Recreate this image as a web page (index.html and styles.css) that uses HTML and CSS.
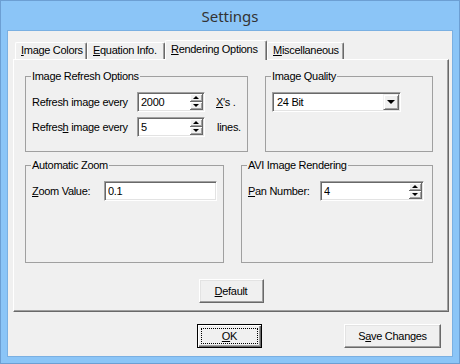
FILE: index.html
```html
<!DOCTYPE html>
<html lang="en">
<head>
    <meta charset="UTF-8">
    <title>Settings</title>
    <link rel="stylesheet" href="styles.css">
</head>
<body>

    <!-- Dialog window -->
    <div class="window">
        <div class="titlebar">Settings</div>

        <div class="client">
            <!-- Tabs -->
            <div class="tabs">
                <div class="tab tab-colors"><u>I</u>mage Colors</div>
                <div class="tab tab-equation"><u>E</u>quation Info.</div>
                <div class="tab tab-rendering active"><u>R</u>endering Options</div>
                <div class="tab tab-misc"><u>M</u>iscellaneous</div>
            </div>

            <!-- Rendering Options page -->
            <div class="panel">
                <div class="group-row">
                    <fieldset class="group group-refresh">
                        <legend>Image Refresh Options</legend>
                        <div class="field-row">
                            <label class="field-label refresh-label">Refresh image every</label>
                            <div class="edit refresh-edit">
                                <input type="text" value="2000">
                                <div class="spin">
                                    <span class="spin-btn"><span class="arrow-up"></span></span>
                                    <span class="spin-btn"><span class="arrow-down"></span></span>
                                </div>
                            </div>
                            <span class="unit"><u>X</u>'s .</span>
                        </div>
                        <div class="field-row">
                            <label class="field-label refresh-label">Refres<u>h</u> image every</label>
                            <div class="edit refresh-edit">
                                <input type="text" value="5">
                                <div class="spin">
                                    <span class="spin-btn"><span class="arrow-up"></span></span>
                                    <span class="spin-btn"><span class="arrow-down"></span></span>
                                </div>
                            </div>
                            <span class="unit unit-lines">lines.</span>
                        </div>
                    </fieldset>

                    <fieldset class="group group-quality">
                        <legend>Image Quality</legend>
                        <div class="field-row">
                            <div class="edit combo">
                                <span class="combo-value">24 Bit</span>
                                <span class="combo-btn"><span class="arrow-down big"></span></span>
                            </div>
                        </div>
                    </fieldset>
                </div>

                <div class="group-row">
                    <fieldset class="group group-zoom">
                        <legend>Automatic Zoom</legend>
                        <div class="field-row">
                            <label class="field-label short-label"><u>Z</u>oom Value:</label>
                            <div class="edit zoom-edit">
                                <input type="text" value="0.1">
                            </div>
                        </div>
                    </fieldset>

                    <fieldset class="group group-avi">
                        <legend>AVI Image Rendering</legend>
                        <div class="field-row">
                            <label class="field-label short-label"><u>P</u>an Number:</label>
                            <div class="edit pan-edit">
                                <input type="text" value="4">
                                <div class="spin">
                                    <span class="spin-btn"><span class="arrow-up"></span></span>
                                    <span class="spin-btn"><span class="arrow-down"></span></span>
                                </div>
                            </div>
                        </div>
                    </fieldset>
                </div>

                <div class="panel-actions">
                    <button class="btn btn-small"><u>D</u>efault</button>
                </div>
            </div>

            <!-- Dialog buttons -->
            <div class="footer">
                <button class="btn btn-small btn-focused"><span class="focus-ring"><u>O</u>K</span></button>
                <button class="btn btn-save">S<u>a</u>ve Changes</button>
            </div>
        </div>
    </div>

</body>
</html>
```

FILE: styles.css
```css
/* body */
body {
    margin: 0;
    font-family: "Liberation Sans", Arial, sans-serif;
    font-size: 11px;
    letter-spacing: -0.3px;
    color: #000;
}

/* Window frame */
.window {
    box-sizing: border-box;
    width: 460px;
    height: 364px;
    border: 1px solid #6c9fd3;
    background-color: #8bc5f7;
    padding: 0 6px 6px;
    display: flex;
    flex-direction: column;
}

.titlebar {
    height: 29px;
    line-height: 31px;
    text-align: center;
    font-family: "Noto Sans", "Open Sans", sans-serif;
    font-size: 15px;
    letter-spacing: 0;
    color: #333;
}

.client {
    flex: 1;
    border: 1px solid #7ab0e2;
    background-color: #f0f0f0;
    padding: 9px 0 0 5px;
}

/* Tabs */
.tabs {
    display: flex;
    align-items: flex-end;
    height: 19px;
    padding-left: 2px;
}

.tab {
    box-sizing: border-box;
    height: 17px;
    border: 1px solid;
    border-color: #fff #696969 transparent #fff;
    border-bottom: none;
    border-radius: 2px 2px 0 0;
    box-shadow: inset -1px 0 0 #a0a0a0;
    padding: 1px 0 0 5px;
    line-height: 13px;
    white-space: nowrap;
}

.tab-colors { width: 72px; }
.tab-equation { width: 78px; }
.tab-rendering { width: 102px; }
.tab-misc { width: 77px; }

.tab.active {
    height: 20px;
    margin-bottom: -1px;
    position: relative;
    z-index: 1;
    background-color: #f0f0f0;
    padding-top: 2px;
}

/* Tab page */
.panel {
    box-sizing: border-box;
    width: 436px;
    height: 253px;
    border: 1px solid;
    border-color: #fff #696969 #696969 #fff;
    box-shadow: inset -1px -1px 0 #a0a0a0;
    padding: 10px 11px 0;
}

.group-row {
    display: flex;
    gap: 17px;
}

.group-row + .group-row {
    margin-top: 7px;
}

/* Group boxes */
.group {
    box-sizing: border-box;
    margin: 0;
    padding: 0 6px;
    min-width: 0;
    border: 1px solid #a0a0a0;
}

.group legend {
    padding: 0 1px;
    margin-left: -1px;
    line-height: 13px;
}

.group-refresh { width: 223px; height: 82px; }
.group-quality { width: 168px; height: 82px; }
.group-zoom { width: 199px; height: 104px; }
.group-avi { width: 192px; height: 104px; }

.field-row {
    display: flex;
    align-items: center;
    height: 20px;
    margin-top: 9px;
}

.field-row + .field-row {
    margin-top: 5px;
}

.refresh-label { width: 105px; }
.short-label { width: 72px; }

.unit { margin-left: 11px; }
.unit-lines { margin-left: 12px; }

/* Edit boxes */
.edit {
    box-sizing: border-box;
    height: 20px;
    display: flex;
    align-items: center;
    background-color: #fff;
    border: 1px solid;
    border-color: #a0a0a0 #fff #fff #a0a0a0;
    box-shadow: inset 1px 1px 0 #696969, inset -1px -1px 0 #e3e3e3;
    padding: 1px;
}

.edit input {
    flex: 1;
    min-width: 0;
    height: 100%;
    border: none;
    outline: none;
    background: transparent;
    padding: 0 0 0 2px;
    font: inherit;
    letter-spacing: inherit;
    color: #000;
}

.refresh-edit { width: 68px; }
.zoom-edit { width: 113px; }
.pan-edit { width: 104px; }

/* Spin buttons */
.spin {
    width: 13px;
    height: 16px;
    display: flex;
    flex-direction: column;
}

.spin-btn {
    flex: 1;
    display: flex;
    align-items: center;
    justify-content: center;
    background-color: #f0f0f0;
    border-right: 1px solid #696969;
    border-bottom: 1px solid #696969;
    box-shadow: inset 1px 1px 0 #fff, inset -1px -1px 0 #a0a0a0;
}

.arrow-up {
    width: 0;
    height: 0;
    border-left: 3px solid transparent;
    border-right: 3px solid transparent;
    border-bottom: 3px solid #000;
}

.arrow-down {
    width: 0;
    height: 0;
    border-left: 3px solid transparent;
    border-right: 3px solid transparent;
    border-top: 3px solid #000;
}

.arrow-down.big {
    border-left-width: 4px;
    border-right-width: 4px;
    border-top-width: 4px;
}

/* Combo box */
.combo {
    width: 129px;
    margin-top: -1px;
}

.combo-value {
    flex: 1;
    padding-left: 3px;
}

.combo-btn {
    box-sizing: border-box;
    width: 16px;
    height: 16px;
    display: flex;
    align-items: center;
    justify-content: center;
    background-color: #f0f0f0;
    border: 1px solid;
    border-color: #f0f0f0 #696969 #696969 #f0f0f0;
    box-shadow: inset 1px 1px 0 #fff, inset -1px -1px 0 #a0a0a0;
}

/* Buttons */
.panel-actions {
    display: flex;
    justify-content: center;
    margin-top: 16px;
}

.btn {
    box-sizing: border-box;
    height: 24px;
    padding: 0;
    background-color: #f0f0f0;
    border: 1px solid;
    border-color: #fff #696969 #696969 #fff;
    box-shadow: inset -1px -1px 0 #a0a0a0, inset 1px 1px 0 #e3e3e3;
    font: inherit;
    letter-spacing: inherit;
    color: #000;
}

.btn-small { width: 65px; }
.btn-save { width: 97px; }

.btn-focused {
    border-color: #000;
    box-shadow: inset 1px 1px 0 #fff, inset -1px -1px 0 #696969, inset -2px -2px 0 #a0a0a0;
    padding: 3px;
}

.focus-ring {
    display: flex;
    align-items: center;
    justify-content: center;
    height: 100%;
    box-sizing: border-box;
    border: 1px dotted #000;
}

.footer {
    display: flex;
    gap: 82px;
    margin-top: 12px;
    padding-left: 184px;
}
```
